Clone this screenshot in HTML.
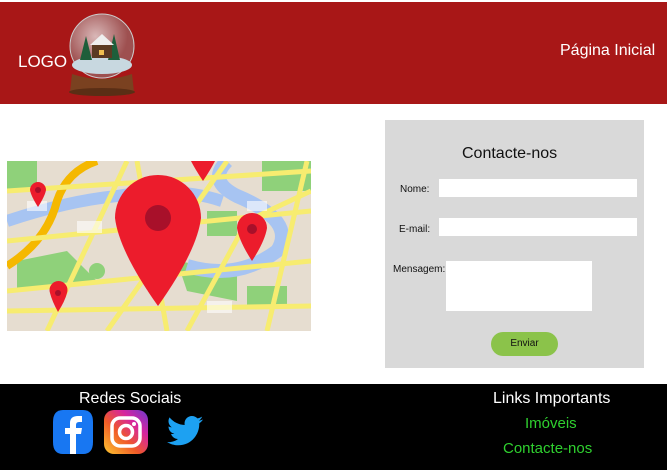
<!DOCTYPE html>
<html><head><meta charset="utf-8"><style>
*{margin:0;padding:0;box-sizing:border-box}
body{width:667px;height:472px;background:#fff;font-family:"Liberation Sans",sans-serif;position:relative;overflow:hidden}
.hdr{position:absolute;left:0;top:2px;width:667px;height:102px;background:#a81717}
.t{position:absolute;white-space:nowrap}
.form{position:absolute;left:385px;top:120px;width:259px;height:248px;background:#d9d9d9}
.in{position:absolute;background:#fff}
.ftr{position:absolute;left:0;top:384px;width:667px;height:86px;background:#000}
</style></head><body>
<div class="hdr">
  <div class="t" style="left:18px;top:50px;color:#fff;font-size:17px">LOGO</div>
  <svg style="position:absolute;left:64px;top:10px" width="76" height="86" viewBox="0 0 76 86">
    <defs><radialGradient id="g" cx="40%" cy="35%"><stop offset="0" stop-color="#d9b7b7"/><stop offset="1" stop-color="#9e5050"/></radialGradient></defs>
    <ellipse cx="38" cy="34" rx="32" ry="32" fill="url(#g)" stroke="#ccc" stroke-width="1"/>
    <ellipse cx="38" cy="53" rx="30" ry="9" fill="#c8d8e0"/>
    <polygon points="16,48 22,24 28,48" fill="#1e5e3a"/>
    <polygon points="44,48 50,22 56,48" fill="#1e5e3a"/>
    <polygon points="28,32 38,24 48,32 48,46 28,46" fill="#5a3a22"/>
    <polygon points="26,33 38,22 50,33" fill="#eee"/>
    <rect x="35" y="38" width="5" height="5" fill="#f0c050"/>
    <path d="M8 62 Q38 72 68 62 L70 80 Q38 88 6 80Z" fill="#7a4120"/>
    <ellipse cx="38" cy="80" rx="33" ry="4" fill="#5a2e15"/>
  </svg>
  <div class="t" style="left:560px;top:40px;color:#fff;font-size:16px">Página Inicial</div>
</div>

<svg style="position:absolute;left:7px;top:161px" width="304" height="170" viewBox="0 0 304 170">
  <rect width="304" height="170" fill="#e6ddd0"/>
  <g fill="#8fd17a">
    <rect x="0" y="0" width="30" height="30"/>
    <polygon points="10,100 60,90 90,120 10,130"/>
    <polygon points="170,100 230,110 230,140 180,130"/>
    <rect x="255" y="0" width="49" height="30"/>
    <rect x="200" y="50" width="30" height="25"/>
    <rect x="240" y="125" width="40" height="20"/>
    <circle cx="90" cy="110" r="8"/>
  </g>
  <path d="M0 60 Q60 40 110 35 Q170 25 215 40" stroke="#a7c4f2" stroke-width="12" fill="none"/>
  <path d="M220 0 Q200 20 230 35 Q290 60 270 90 Q230 120 180 105" stroke="#a7c4f2" stroke-width="14" fill="none"/>
  <path d="M0 105 Q40 80 50 40 Q60 10 90 0" stroke="#f5b800" stroke-width="8" fill="none"/>
  <g stroke="#f7ec70" stroke-width="5" fill="none">
    <path d="M0 80 L304 50"/><path d="M0 130 L304 100"/><path d="M40 170 L120 0"/>
    <path d="M100 170 L220 0"/><path d="M180 170 L240 60 L304 30"/><path d="M0 30 L304 10"/>
    <path d="M0 150 L304 145"/><path d="M260 170 L300 0"/><path d="M130 0 L160 170"/>
  </g>
  <g fill="#fff" opacity=".6"><rect x="20" y="40" width="20" height="10"/><rect x="70" y="60" width="25" height="12"/><rect x="140" y="120" width="20" height="10"/><rect x="240" y="40" width="20" height="10"/><rect x="200" y="140" width="25" height="12"/></g>
  <g fill="#ec1c2c">
    <path d="M108 57 A43 43 0 1 1 194 57 Q190 90 151 145 Q112 90 108 57Z"/>
    <path d="M23 29 A8 8 0 1 1 39 29 Q38 35 31 46 Q24 35 23 29Z"/>
    <path d="M230 67 A15 15 0 1 1 260 67 Q258 80 245 100 Q232 80 230 67Z"/>
    <path d="M43 132 A9 9 0 1 1 60 132 Q58 140 51 151 Q45 140 43 132Z"/>
    <path d="M184 0 L208 0 Q204 8 196 20 Q188 8 184 0Z"/>
  </g>
  <g fill="#a8102a"><circle cx="151" cy="57" r="13"/><circle cx="31" cy="29" r="3"/><circle cx="245" cy="68" r="5"/><circle cx="51" cy="132" r="3"/></g>
</svg>

<div class="form">
  <div class="t" style="left:77px;top:25px;font-size:16px;color:#111">Contacte-nos</div>
  <div class="t" style="left:15px;top:64px;font-size:10px;color:#111">Nome:</div>
  <div class="in" style="left:54px;top:59px;width:198px;height:18px"></div>
  <div class="t" style="left:14px;top:104px;font-size:10px;color:#111">E-mail:</div>
  <div class="in" style="left:54px;top:98px;width:198px;height:18px"></div>
  <div class="t" style="left:8px;top:144px;font-size:10px;color:#111">Mensagem:</div>
  <div class="in" style="left:61px;top:141px;width:146px;height:50px"></div>
  <div style="position:absolute;left:106px;top:212px;width:67px;height:24px;background:#8bc34a;border-radius:12px;font-size:10px;text-align:center;line-height:24px;color:#111">Enviar</div>
</div>

<div class="ftr">
  <div class="t" style="left:79px;top:6px;color:#fff;font-size:16px">Redes Sociais</div>
  <svg style="position:absolute;left:53px;top:26px" width="40" height="44" viewBox="0 0 40 44">
    <path d="M10 0 H30 Q40 0 40 12 V32 Q40 44 30 44 H10 Q0 44 0 32 V12 Q0 0 10 0Z" fill="#1877f2"/>
    <path d="M17 44 V24 H12 V18 H17 V13 Q17 6 25 6 H29 V12 H26 Q23 12 23 15 V18 H29 L28 24 H23 V44Z" fill="#fff"/>
  </svg>
  <svg style="position:absolute;left:104px;top:26px" width="44" height="44" viewBox="0 0 44 44">
    <defs><linearGradient id="ig" x1="0" y1="1" x2="1" y2="0"><stop offset="0" stop-color="#fdc830"/><stop offset=".4" stop-color="#f05a28"/><stop offset=".7" stop-color="#d6249f"/><stop offset="1" stop-color="#6a3bd1"/></linearGradient></defs>
    <rect width="44" height="44" rx="10" fill="url(#ig)"/>
    <rect x="8" y="8" width="28" height="28" rx="8" fill="none" stroke="#fff" stroke-width="3.5"/>
    <circle cx="22" cy="22" r="6.5" fill="none" stroke="#fff" stroke-width="3.5"/>
    <circle cx="30" cy="14" r="2" fill="#fff"/>
  </svg>
  <svg style="position:absolute;left:167px;top:32px" width="36" height="30" viewBox="0 0 24 20">
    <path d="M24 2.3c-.9.4-1.8.7-2.8.8 1-.6 1.8-1.6 2.2-2.7-1 .6-2 1-3.1 1.200C19.3.6 18 0 16.6 0c-2.7 0-4.9 2.2-4.9 4.9 0 .4 0 .8.1 1.1C7.7 5.8 4.1 3.9 1.7.9c-.4.7-.7 1.6-.7 2.5 0 1.7.9 3.2 2.2 4.1-.8 0-1.6-.2-2.2-.6v.1c0 2.4 1.7 4.4 3.900 4.8-.4.1-.8.2-1.3.2-.3 0-.6 0-.9-.1.6 2 2.4 3.4 4.6 3.4-1.7 1.3-3.8 2.1-6.1 2.1-.4 0-.8 0-1.2-.1 2.2 1.4 4.8 2.2 7.5 2.2 9.1 0 14-7.5 14-14v-.6c1-.7 1.8-1.6 2.5-2.5z" fill="#1da1f2"/>
  </svg>
  <div class="t" style="left:493px;top:6px;color:#fff;font-size:16px">Links Importants</div>
  <div class="t" style="left:525px;top:31px;color:#2fd02f;font-size:15px">Imóveis</div>
  <div class="t" style="left:503px;top:56px;color:#2fd02f;font-size:15px">Contacte-nos</div>
</div>
</body></html>
